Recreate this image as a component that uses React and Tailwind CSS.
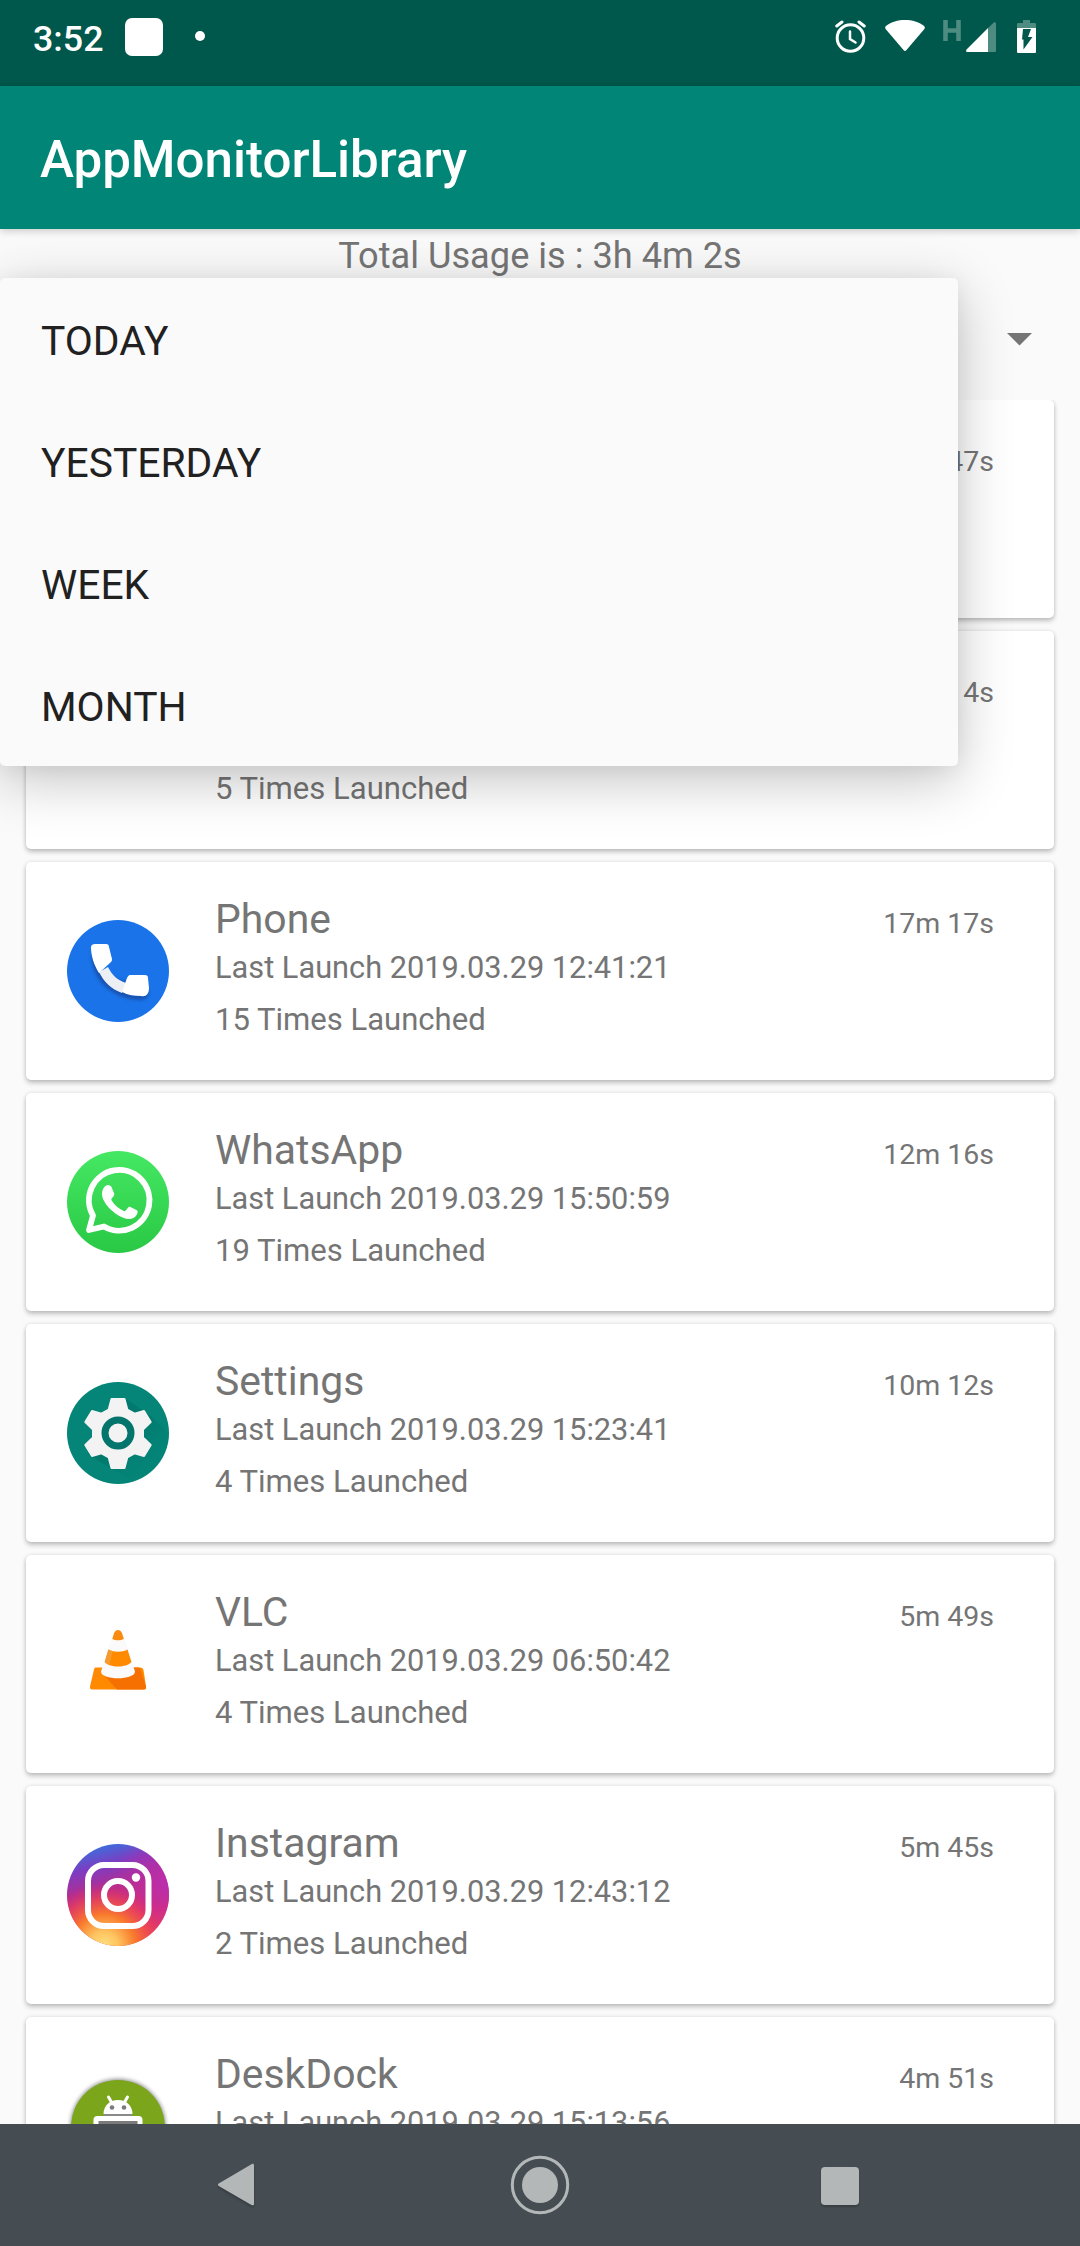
const RANGES = ["TODAY", "YESTERDAY", "WEEK", "MONTH"];

function PhoneIcon() {
  return (
    <svg viewBox="0 0 102 102" className="size-[102px]">
      <defs>
        <filter id="phoneShadow" x="-20%" y="-20%" width="150%" height="150%">
          <feGaussianBlur stdDeviation="1.6" />
        </filter>
      </defs>
      <circle cx="51" cy="51" r="51" fill="#1a73e8" />
      <path d="M24 32c0 32 24 46 46 48 8 1 12-2 12-9l-8-10-18 0C44 58 36 54 34 48Z" fill="#17479e" opacity=".7" filter="url(#phoneShadow)" />
      <path d="M32 52l9-5c4 8 9 13 18 16l-4 10C44 69 37 62 32 52Z" fill="#eceff4" />
      <path d="M28 24h11c2 0 3 1 3 3l3 12c0 1 0 2-1 3l-12 11c-5-8-8-17-8-26 0-2 2-3 4-3Z" fill="#fff" />
      <path d="M63 55h15c2 0 3 1 3 3l1 10c0 6-3 9-8 8-7 0-13-1-19-4l5-14c1-2 2-3 3-3Z" fill="#fff" />
    </svg>
  );
}

function WhatsAppIcon() {
  return (
    <svg viewBox="0 0 102 102" className="size-[102px]">
      <defs>
        <linearGradient id="waGreen" x1="0" y1="0" x2="0" y2="1">
          <stop offset="0" stopColor="#45e863" />
          <stop offset="1" stopColor="#29c845" />
        </linearGradient>
      </defs>
      <circle cx="51" cy="51" r="51" fill="url(#waGreen)" />
      <path d="M22 79l4-14.500a30.300 30.300 0 1 1 11 11Z" fill="none" stroke="#fff" strokeWidth="5.800" strokeLinejoin="round" />
      <path d="M35 43c0-5 3-9 6-9 2 0 3 1 3.500 2l2.500 6c.5 1 .3 2-.3 3l-2 2.500c-.5.600-.5 1.200 0 2 3 5 7 8 12 10.500.8.400 1.400.200 2-.4l2.500-3c.6-.8 1.300-.9 2.200-.5l6 2.800c1 .5 1.300 1 1.200 2-.4 4-4 7.100-9 7.100C51 67.500 35 53 35 43Z" fill="#fff" />
    </svg>
  );
}

function SettingsIcon() {
  return (
    <svg viewBox="0 0 102 102" className="size-[102px]">
      <defs>
        <clipPath id="setClip"><circle cx="51" cy="51" r="51" /></clipPath>
        <linearGradient id="setShade" x1="0.200" y1="0.200" x2="0.800" y2="0.800">
          <stop offset="0.400" stopColor="#00756a" />
          <stop offset="1" stopColor="#00857a" stopOpacity="0" />
        </linearGradient>
      </defs>
      <circle cx="51" cy="51" r="51" fill="#048577" />
      <path clipPath="url(#setClip)" d="M59 17L84 34 110 60 75 105 40 84 20 72 51 50Z" fill="url(#setShade)" opacity=".75" />
      <path
        fill="#f3f3f3"
        stroke="#f3f3f3"
        strokeWidth="2"
        strokeLinejoin="round"
        d="M44.500 17h13l2.800 10.500 7.200 4.200 9.500-2.700 6.700 11-7.700 7.500v8l7.700 7.500-6.700 11-9.500-2.700-7.200 4.200-2.800 10.500h-13l-2.800-10.500-7.200-4.200-9.500 2.700-6.700-11 7.700-7.500v-8l-7.700-7.500 6.700-11 9.500 2.700 7.200-4.200Z"
      />
      <circle cx="51" cy="51" r="13" fill="#f3f3f3" stroke="#04756d" strokeWidth="7" />
    </svg>
  );
}

function VlcIcon() {
  return (
    <svg viewBox="0 0 102 102" className="size-[102px]">
      <path d="M29 54.500h44c2 0 3 1 3.500 2.500L79 73.500c.3 2-.5 3-2 3H25c-1.500 0-2.300-1-2-3l4-17c.4-1.500 1-2 2-2Z" fill="#ff8a00" />
      <path d="M36 61l14 15.500h27c1.500 0 2.300-1 2-3l-5.500-17c-.5-1.500-1-2-2.500-2H63Z" fill="#f57000" />
      <path d="M34 58.500L46 21c1-5 9-5 10 0L68 58.500c.5 9-34.500 9-34 0Z" fill="#fafafa" />
      <path d="M45.300 26l1.500-5c1.500-5.300 7-5.300 8.500 0l1.500 5c-3 1.700-8.500 1.700-11.500 0Z" fill="#f98b10" />
      <path d="M41.500 36.500c5 3 14 3 19 0L64.500 49c-5 6-22 6-26.800 0Z" fill="#ff8a00" />
      <path d="M41.500 36.500l4 1.700-3 14-4.800-3.200Z" fill="#f59a30" />
    </svg>
  );
}

function InstagramIcon() {
  return (
    <svg viewBox="0 0 102 102" className="size-[102px]">
      <defs>
        <linearGradient id="igBase" x1="0.350" y1="0" x2="0.600" y2="1">
          <stop offset="0" stopColor="#3a70dd" />
          <stop offset="0.200" stopColor="#7d3cc2" />
          <stop offset="0.420" stopColor="#b32d90" />
          <stop offset="0.700" stopColor="#e02a6a" />
          <stop offset="1" stopColor="#f04a50" />
        </linearGradient>
        <radialGradient id="igWarm" cx="0.360" cy="1" r="0.620">
          <stop offset="0" stopColor="#ffe080" />
          <stop offset="0.220" stopColor="#fdc560" />
          <stop offset="0.500" stopColor="#f97a2c" />
          <stop offset="0.750" stopColor="#ee4a50" stopOpacity=".7" />
          <stop offset="1" stopColor="#e02a6a" stopOpacity="0" />
        </radialGradient>
        <radialGradient id="igPurple" cx="1" cy="0.400" r="0.550">
          <stop offset="0" stopColor="#b92fb0" />
          <stop offset="1" stopColor="#c22da0" stopOpacity="0" />
        </radialGradient>
      </defs>
      <circle cx="51" cy="51" r="51" fill="url(#igBase)" />
      <circle cx="51" cy="51" r="51" fill="url(#igPurple)" />
      <circle cx="51" cy="51" r="51" fill="url(#igWarm)" />
      <g fill="none" stroke="#fff" strokeWidth="6">
        <rect x="21" y="21" width="60.500" height="61" rx="16" />
        <circle cx="51" cy="51" r="14" />
      </g>
      <circle cx="69" cy="33.500" r="4.200" fill="#fff" />
    </svg>
  );
}

function DeskDockIcon() {
  return (
    <svg viewBox="0 0 102 102" className="size-[102px] overflow-visible">
      <defs>
        <filter id="dockShadow" x="-20%" y="-20%" width="140%" height="140%">
          <feGaussianBlur stdDeviation="2" />
        </filter>
      </defs>
      <circle cx="51" cy="51.500" r="47.500" fill="#000" opacity=".45" filter="url(#dockShadow)" />
      <circle cx="51" cy="52" r="47" fill="#7ba61c" />
      <path d="M41.500 22l4 7M60.500 22l-4 7" stroke="#fff" strokeWidth="3" strokeLinecap="round" />
      <path d="M36.500 39c0-8 6-14 14.500-14s14.500 6 14.500 14Z" fill="#fff" />
      <circle cx="45" cy="32.500" r="2.300" fill="#7b7b7b" />
      <circle cx="57" cy="32.500" r="2.300" fill="#7b7b7b" />
      <path d="M37 39h28v2H37Z" fill="#8a8a8a" />
      <rect x="26.500" y="41" width="49" height="36" rx="4" fill="#fff" />
      <rect x="31.500" y="46" width="39" height="26" fill="#7b7b7b" />
    </svg>
  );
}

const APPS = [
  { id: 1, time: "47s" },
  { id: 2, times: 5, time: "4s" },
  { id: 3, name: "Phone", last: "12:41:21", times: 15, time: "17m 17s", Icon: PhoneIcon },
  { id: 4, name: "WhatsApp", last: "15:50:59", times: 19, time: "12m 16s", Icon: WhatsAppIcon },
  { id: 5, name: "Settings", last: "15:23:41", times: 4, time: "10m 12s", Icon: SettingsIcon },
  { id: 6, name: "VLC", last: "06:50:42", times: 4, time: "5m 49s", Icon: VlcIcon },
  { id: 7, name: "Instagram", last: "12:43:12", times: 2, time: "5m 45s", Icon: InstagramIcon },
  { id: 8, name: "DeskDock", last: "15:13:56", time: "4m 51s", Icon: DeskDockIcon },
];

function StatusBar() {
  return (
    <div className="flex h-[86px] shrink-0 items-start bg-[#00574b] pl-[33px] pr-[44px] text-white">
      <span className="mt-[17px] w-[92px] text-[35.800px] font-medium leading-[44px]">3:52</span>
      <span className="mt-[18px] size-[38px] rounded-[7px] bg-white" />
      <span className="ml-[32px] mt-[31px] size-[10px] rounded-full bg-white" />
      <div className="ml-auto flex items-start">
        <svg width="31" height="33" viewBox="0 0 31 33" className="mt-[20px]" fill="none" stroke="#fff" strokeLinecap="round">
          <circle cx="15.500" cy="18" r="13.300" strokeWidth="3" />
          <path d="M15 11.500v7.500l5.500 3.500" strokeWidth="2.500" />
          <path d="M1.800 6L7 2M29.200 6L24 2" strokeWidth="3" />
        </svg>
        <svg width="40" height="32" viewBox="0 0 40 32" className="ml-[19px] mt-[20px]">
          <path d="M20 0C13 0 6 2 1.200 5.800 0 6.800 0 8 .6 9L18.700 30.200c.8.900 1.800.9 2.600 0L39.400 9c.6-1 .6-2.200-.6-3.200C34 2 27 0 20 0Z" fill="#fff" />
        </svg>
        <svg width="18" height="21" viewBox="0 0 18 21" className="ml-[18px] mt-[20px]">
          <path d="M2.500 0v21M15.500 0v21M2 10.500h14" stroke="#4e8b81" strokeWidth="4.600" />
        </svg>
        <svg width="30" height="31" viewBox="0 0 30 31" className="ml-[5px] mt-[22px]">
          <path d="M22 6v24H1.500C0 30-.3 28.500.6 27.500Z" fill="#fff" />
          <path d="M22 6l5.500-5.300C28.500-.2 30 .2 30 1.500V29c0 .6-.4 1-1 1h-7Z" fill="#4e8b81" />
        </svg>
        <svg width="19" height="33" viewBox="0 0 19 33" className="ml-[21px] mt-[20px]">
          <path d="M6 0h7v3h4.500c1 0 1.500.5 1.500 1.500V8H0V4.500C0 3.500.5 3 1.500 3H6Z" fill="#4e8b81" />
          <path d="M0 8h19v23.500c0 1-.5 1.500-1.500 1.500h-16C.5 33 0 32.500 0 31.500Z" fill="#fff" />
          <path d="M6 9h8l-3 8h4.500L6.500 29.500V19.500H5Z" fill="#00574b" />
        </svg>
      </div>
    </div>
  );
}

function AppCard({ name, last, times, time, Icon }) {
  return (
    <div className="flex h-[218px] shrink-0 items-start rounded-[5px] bg-white pl-[41px] pr-[60px] shadow-[0_3px_5px_rgba(0,0,0,0.22),0_0_4px_rgba(0,0,0,0.1)]">
      <div className="mt-[58px] size-[102px]">{Icon && <Icon />}</div>
      <div className="ml-[46px] flex flex-col pt-[32px]">
        <span className="h-[50px] text-[40.900px] leading-[50px]">{name}</span>
        <span className="mt-[4px] h-[40px] text-[30.750px] leading-[40px]">{last && `Last Launch 2019.03.29 ${last}`}</span>
        <span className="mt-[12px] h-[40px] text-[31.050px] leading-[40px]">{times && `${times} Times Launched`}</span>
      </div>
      <span className="ml-auto mt-[42px] text-[28.500px] leading-[40px]">{time}</span>
    </div>
  );
}

function RangeMenu() {
  return (
    <ul className="absolute left-0 top-[278px] w-[958px] rounded-[5px] bg-[#fafafa] text-[#212121] shadow-[0_14px_56px_rgba(0,0,0,0.24),0_2px_20px_rgba(0,0,0,0.05)]">
      {RANGES.map((r) => (
        <li key={r} className="flex h-[122px] items-center pl-[41px] pt-[4px] text-[40.800px] leading-[50px]">{r}</li>
      ))}
    </ul>
  );
}

function NavBar() {
  return (
    <div className="z-10 flex h-[122px] shrink-0 items-center bg-[#454d52] pl-[217px]">
      <svg width="38" height="44" viewBox="0 0 38 44" className="drop-shadow-[0_2px_1px_rgba(0,0,0,0.2)]">
        <path d="M34.500 1.200L1.700 20.500c-1 .7-1 1.700 0 2.400L34.500 42c1.500.8 2.500.2 2.500-1.200V2.500c0-1.500-1-2.200-2.500-1.300Z" fill="#b3b7b8" />
      </svg>
      <svg width="60" height="60" viewBox="0 0 60 60" className="ml-[255px]">
        <circle cx="30" cy="30" r="27.700" fill="none" stroke="#b3b7b8" strokeWidth="3" />
        <circle cx="30" cy="30" r="18" fill="#b3b7b8" />
      </svg>
      <span className="ml-[251px] mt-px size-[38px] rounded-[4px] bg-[#b3b7b8] shadow-[0_2px_2px_rgba(0,0,0,0.2)]" />
    </div>
  );
}

export default function App() {
  return (
    <div className="relative flex h-[2246px] w-[1080px] flex-col overflow-hidden bg-[#fafafa] font-['Roboto',sans-serif] text-[#757575]">
      <StatusBar />
      <div className="z-10 flex h-[143px] shrink-0 items-center bg-[#008577] pl-[40px] pt-[5px] shadow-[0_2px_8px_rgba(0,0,0,0.2)]">
        <h1 className="text-[51.100px] font-medium leading-[60px] text-white">AppMonitorLibrary</h1>
      </div>
      <p className="h-[49px] shrink-0 pt-[5px] text-center text-[36.200px] leading-[44px]">Total Usage is : 3h 4m 2s</p>
      <div className="flex h-[122px] shrink-0 items-center justify-end pr-[48px]">
        <svg width="25" height="13" viewBox="0 0 25 13">
          <path d="M0 0h25L12.500 12.500Z" fill="#757575" />
        </svg>
      </div>
      <div className="flex min-h-0 flex-1 flex-col gap-[13px] overflow-hidden px-[26px]">
        {APPS.map((a) => (
          <AppCard key={a.id} {...a} />
        ))}
      </div>
      <RangeMenu />
      <NavBar />
    </div>
  );
}
